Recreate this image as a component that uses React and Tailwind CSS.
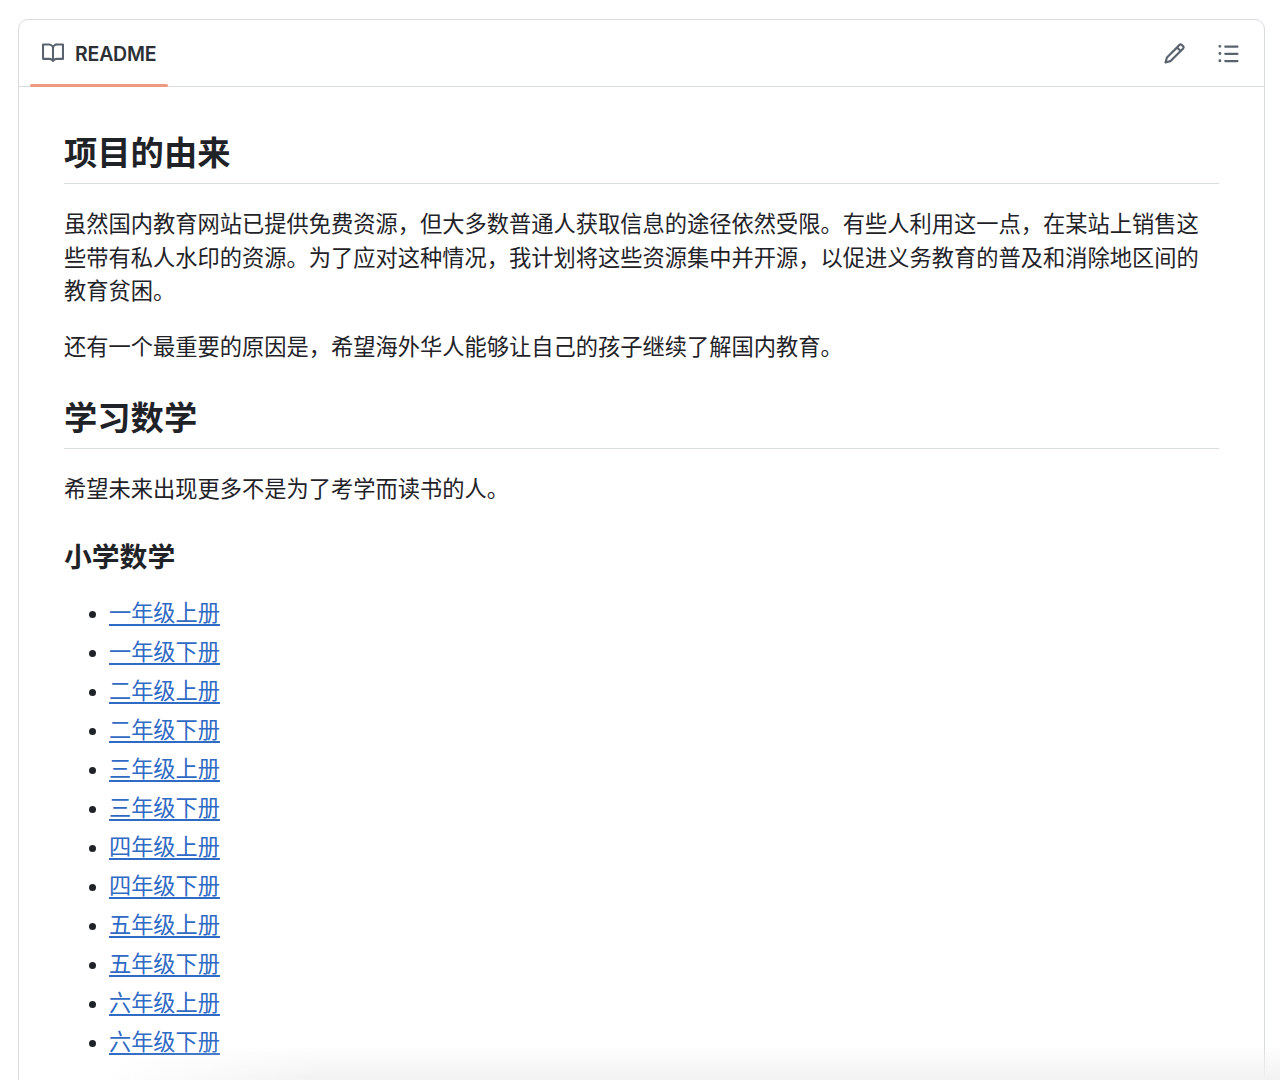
const grades = ['一', '二', '三', '四', '五', '六'];
const links = grades.flatMap((g) => [`${g}年级上册`, `${g}年级下册`]);

function Octicon({ d, className }) {
  return (
    <svg viewBox="0 0 16 16" fill="currentColor" className={className}>
      <path d={d} />
    </svg>
  );
}

const bookIcon =
  'M0 1.75A.75.75 0 0 1 .75 1h4.253c1.227 0 2.317.59 3 1.501A3.743 3.743 0 0 1 11.006 1h4.245a.75.75 0 0 1 .75.75v10.5a.75.75 0 0 1-.75.75h-4.507a2.25 2.25 0 0 0-1.591.659l-.622.621a.75.75 0 0 1-1.06 0l-.622-.621A2.25 2.25 0 0 0 5.258 13H.75a.75.75 0 0 1-.75-.75Zm7.251 10.324.004-5.073-.002-2.253A2.25 2.25 0 0 0 5.003 2.5H1.5v9h3.757a3.75 3.75 0 0 1 1.994.574ZM8.755 4.75l-.004 7.322a3.752 3.752 0 0 1 1.992-.572H14.5v-9h-3.495a2.25 2.25 0 0 0-2.25 2.25Z';
const pencilIcon =
  'M11.013 1.427a1.75 1.75 0 0 1 2.474 0l1.086 1.086a1.75 1.75 0 0 1 0 2.474l-8.61 8.61c-.21.21-.47.364-.756.445l-3.251.93a.75.75 0 0 1-.927-.928l.929-3.25c.081-.286.235-.547.445-.758l8.61-8.61Zm.176 4.823L9.75 4.81l-6.286 6.287a.253.253 0 0 0-.064.108l-.558 1.953 1.953-.558a.253.253 0 0 0 .108-.064Zm1.238-3.763a.25.25 0 0 0-.354 0L10.811 3.75l1.439 1.44 1.263-1.263a.25.25 0 0 0 0-.354Z';
const listIcon =
  'M5.75 2.5h8.5a.75.75 0 0 1 0 1.5h-8.5a.75.75 0 0 1 0-1.5Zm0 5h8.5a.75.75 0 0 1 0 1.5h-8.5a.75.75 0 0 1 0-1.5Zm0 5h8.5a.75.75 0 0 1 0 1.5h-8.5a.75.75 0 0 1 0-1.5ZM2 14a1 1 0 1 1 0-2 1 1 0 0 1 0 2Zm1-6a1 1 0 1 1-2 0 1 1 0 0 1 2 0ZM2 4a1 1 0 1 1 0-2 1 1 0 0 1 0 2Z';

export default function App() {
  return (
    <div className="relative h-[1080px] overflow-hidden bg-white pt-[19px] pl-[18px] pr-[15px] font-['Liberation_Sans','Noto_Sans_CJK_SC',sans-serif] text-[#1f2328]">
      <div className="min-h-[1100px] rounded-t-[10px] border border-[#d8dbdf]">
        <header className="flex h-[67px] items-center justify-between border-b border-[#d8dbdf]">
          <div className="relative ml-[11px] flex h-full w-[138px] items-center pl-[12px]">
            <Octicon d={bookIcon} className="h-[22px] w-[22px] text-[#59636e]" />
            <span className="mt-[3px] ml-[11px] font-['Inter',sans-serif] text-[19.5px] font-semibold tracking-[-0.2px] text-[#2b3036]">README</span>
            <span className="absolute -bottom-px left-0 h-[3px] w-full rounded-sm bg-[#ee9a82]" />
          </div>
          <div className="mr-[24px] flex items-center gap-[31px] text-[#59636e]">
            <Octicon d={pencilIcon} className="h-[23px] w-[23px]" />
            <Octicon d={listIcon} className="h-[23px] w-[23px]" />
          </div>
        </header>

        <article className="px-[45px] pt-[45px]">
          <h1 className="border-b border-[#d8dee4] pb-[7px] text-[33.3px] leading-[44px] font-bold">项目的由来</h1>
          <p className="mt-[24px] text-[22.25px] leading-[33.7px]">
            虽然国内教育网站已提供免费资源，但大多数普通人获取信息的途径依然受限。有些人利用这一点，在某站上销售这些带有私人水印的资源。为了应对这种情况，我计划将这些资源集中并开源，以促进义务教育的普及和消除地区间的教育贫困。
          </p>
          <p className="mt-[22px] text-[22.25px] leading-[33.7px]">
            还有一个最重要的原因是，希望海外华人能够让自己的孩子继续了解国内教育。
          </p>
          <h2 className="mt-[32px] border-b border-[#d8dee4] pb-[7px] text-[33.3px] leading-[44px] font-bold">学习数学</h2>
          <p className="mt-[24px] text-[22.25px] leading-[33.7px]">希望未来出现更多不是为了考学而读书的人。</p>
          <h3 className="mt-[33px] text-[27.8px] leading-[36px] font-bold">小学数学</h3>
          <ul className="mt-[21px] list-disc pl-[45px] text-[22.2px] leading-[33.7px]">
            {links.map((text, i) => (
              <li key={text} className={i > 0 ? 'mt-[5.3px]' : ''}>
                <a href="#" className="text-[#2f6ac4] underline decoration-2 underline-offset-[3px] [text-decoration-skip-ink:none]">
                  {text}
                </a>
              </li>
            ))}
          </ul>
        </article>
      </div>
      <div className="absolute inset-x-0 bottom-0 h-[35px] bg-gradient-to-b from-white/0 to-[#f2f2f2] [mask-image:linear-gradient(to_right,transparent_100px,black_320px)]" />
    </div>
  );
}
